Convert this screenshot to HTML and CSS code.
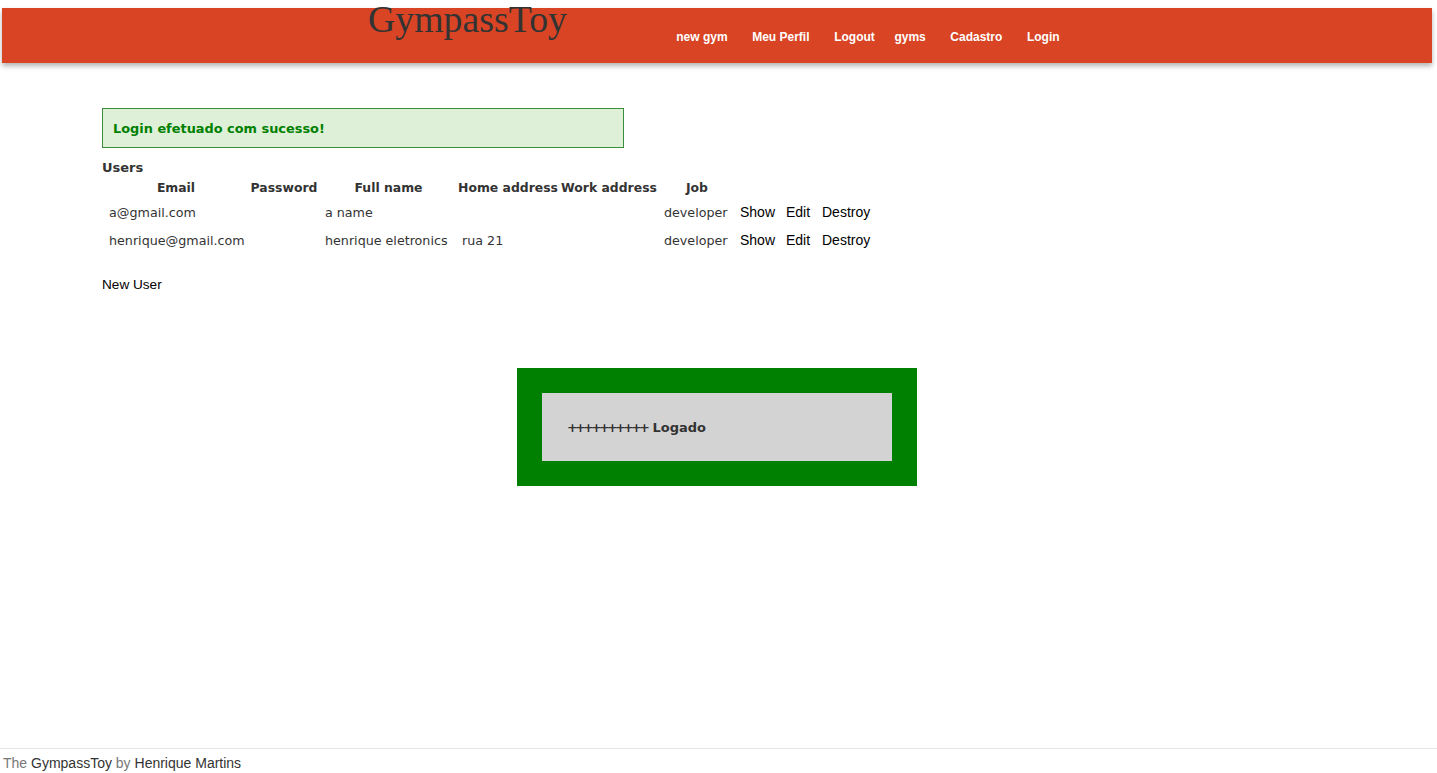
FILE: index.html
```html
<!DOCTYPE html>
<html lang="pt">
<head>
<meta charset="utf-8">
<title>GympassToy</title>
<link rel="stylesheet" href="styles.css">
</head>
<body>
<header class="topbar">
  <h1 class="brand">GympassToy</h1>
  <nav class="nav">
    <ul class="nav-group">
      <li><a href="#">new gym</a></li>
      <li><a href="#">Meu Perfil</a></li>
      <li><a href="#">Logout</a></li>
    </ul>
    <ul class="nav-group nav-main">
      <li><a href="#">gyms</a></li>
      <li><a href="#">Cadastro</a></li>
      <li><a href="#">Login</a></li>
    </ul>
  </nav>
</header>

<main class="content">
  <div class="alert">Login efetuado com sucesso!</div>
  <h2 class="section-title">Users</h2>
  <table class="users">
    <colgroup>
      <col class="c-email"><col class="c-pass"><col class="c-name"><col class="c-home"><col class="c-work"><col class="c-job"><col class="c-show"><col class="c-edit"><col class="c-destroy">
    </colgroup>
    <thead>
      <tr>
        <th>Email</th><th>Password</th><th>Full name</th><th>Home address</th><th>Work address</th><th>Job</th><th></th><th></th><th></th>
      </tr>
    </thead>
    <tbody>
      <tr>
        <td>a@gmail.com</td><td></td><td>a name</td><td></td><td></td><td>developer</td>
        <td><a href="#">Show</a></td><td><a href="#">Edit</a></td><td><a href="#">Destroy</a></td>
      </tr>
      <tr>
        <td>henrique@gmail.com</td><td></td><td>henrique eletronics</td><td>rua 21</td><td></td><td>developer</td>
        <td><a href="#">Show</a></td><td><a href="#">Edit</a></td><td><a href="#">Destroy</a></td>
      </tr>
    </tbody>
  </table>
  <a class="new-link" href="#">New User</a>

  <div class="status-frame">
    <div class="status-box"><span class="status-text"><span class="pluses">++++++++++</span> Logado</span></div>
  </div>
</main>

<footer class="footer">The <a href="#">GympassToy</a> by <a href="#">Henrique Martins</a></footer>
</body>
</html>
```

FILE: styles.css
```css
html, body {
  margin: 0;
  padding: 0;
}

body {
  min-height: 100vh;
  display: flex;
  flex-direction: column;
  background: #fff;
  font-family: "DejaVu Sans", Verdana, sans-serif;
  color: #333;
}

a {
  text-decoration: none;
}

/* Header */
.topbar {
  display: flex;
  align-items: flex-start;
  height: 55px;
  margin: 8px 5px 0 2px;
  background: #d84424;
  box-shadow: 0 3px 5px rgba(0, 0, 0, 0.3);
}

.brand {
  margin: -7.5px 0 0 366px;
  font-family: "Liberation Serif", "Times New Roman", serif;
  font-weight: normal;
  font-size: 37.8px;
  line-height: 36px;
  color: #333;
}

.nav {
  display: flex;
  margin: 21px 0 0 97px;
}

.nav-group {
  display: flex;
  list-style: none;
  margin: 0;
  padding: 0;
}

.nav-main {
  margin-left: -5px;
}

.nav-group a {
  display: block;
  padding: 0 12.3px;
  font-family: "Liberation Sans", Arial, sans-serif;
  font-weight: bold;
  font-size: 12px;
  line-height: 16px;
  color: #fff;
}

/* Main */
.content {
  display: flex;
  flex-direction: column;
  align-items: flex-start;
  margin: 45px 105px 0 102px;
}

.alert {
  box-sizing: border-box;
  width: 522px;
  height: 40px;
  display: flex;
  align-items: center;
  padding: 0 10px;
  border: 1px solid #3c8d3c;
  background: #dff0d8;
  color: #008000;
  font-weight: bold;
  font-size: 12.9px;
}

.section-title {
  margin: 11px 0 0;
  font-size: 13px;
  line-height: 18px;
  font-weight: bold;
  color: #333;
}

.users {
  border-collapse: collapse;
  table-layout: fixed;
  width: 817px;
  margin-left: 2px;
}

.c-email { width: 144px; }
.c-pass { width: 72px; }
.c-name { width: 137px; }
.c-home { width: 102px; }
.c-work { width: 100px; }
.c-job { width: 76px; }
.c-show { width: 46px; }
.c-edit { width: 36px; }
.c-destroy { width: 104px; }

.users th {
  height: 21px;
  padding: 0;
  font-size: 12.4px;
  font-weight: bold;
  text-align: center;
  white-space: nowrap;
  color: #333;
}

.users td {
  height: 28px;
  padding: 0 5px;
  font-size: 12.7px;
  white-space: nowrap;
  text-align: left;
  color: #333;
}

.users td a,
.new-link {
  font-family: "Liberation Sans", Arial, sans-serif;
  font-size: 14px;
  color: #000;
}

.new-link {
  margin-top: 22px;
  line-height: 18px;
  font-size: 13.6px;
}

.status-frame {
  align-self: center;
  margin-top: 74px;
  padding: 25px;
  background: #008000;
}

.status-box {
  box-sizing: border-box;
  width: 350px;
  height: 68px;
  display: flex;
  align-items: center;
  padding: 0 25px;
  background: #d3d3d3;
  font-weight: bold;
  font-size: 13px;
  color: #333;
}

.pluses {
  letter-spacing: -2.9px;
  margin-right: 1px;
}

/* Footer */
.footer {
  margin-top: auto;
  height: 24px;
  padding-left: 3px;
  border-top: 1px solid #e5e5e5;
  font-family: "Liberation Sans", Arial, sans-serif;
  font-size: 14px;
  line-height: 28px;
  color: #777;
}

.footer a {
  color: #333;
}
```
